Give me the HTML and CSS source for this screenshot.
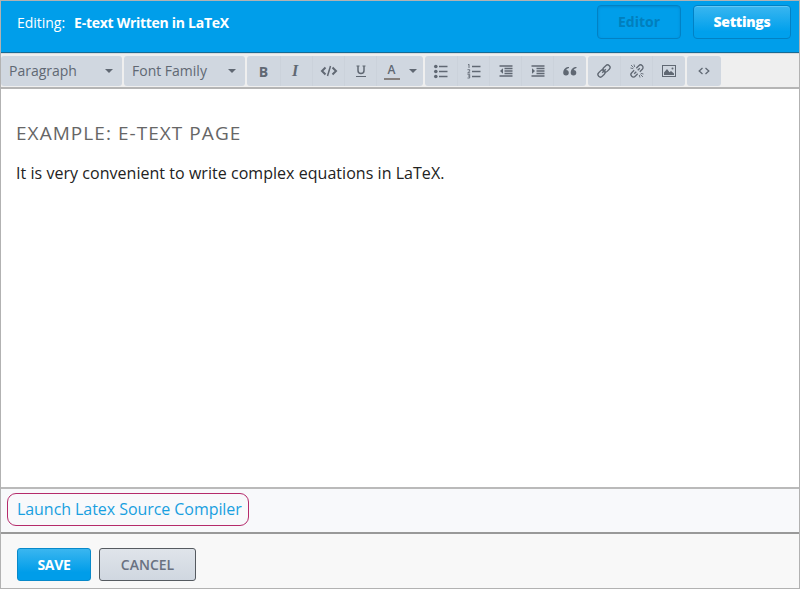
FILE: index.html
```html
<!DOCTYPE html>
<html lang="en">
<head>
<meta charset="utf-8">
<title>E-text Written in LaTeX</title>
<link rel="stylesheet" href="styles.css">
</head>
<body>
<div class="app">
  <header class="header">
    <div class="title"><span class="label">Editing:</span><strong>E-text Written in LaTeX</strong></div>
    <div class="tabs"><button class="tab pressed">Editor</button><button class="tab raised">Settings</button></div>
  </header>
  <div class="toolbar">
    <div class="group select para"><span>Paragraph</span><i class="caret"></i></div>
    <div class="group select family"><span>Font Family</span><i class="caret"></i></div>
    <div class="group format">
      <button class="tool bold">B</button>
      <button class="tool italic">I</button>
      <button class="tool"><svg width="18" height="16" viewBox="0 0 18 16"><path d="M5.500 4.500 2 8l3.500 3.500M12.500 4.500 16 8l-3.500 3.500" stroke-width="2"/><path d="M10.500 3 7.500 13" stroke-width="1.500"/></svg></button>
      <button class="tool"><svg width="12" height="16" viewBox="0 0 12 16"><path d="M3 3v4.500q0 3 3 3t3-3V3" stroke-width="1.500"/><path d="M1.500 3h3M7.500 3h3" stroke-width="1"/><path d="M1 13.500h10" stroke-width="1"/></svg></button>
      <button class="tool color"><span class="letter">A</span><i class="caret"></i></button>
    </div>
    <div class="group">
      <button class="tool"><svg width="16" height="16" viewBox="0 0 16 16"><path d="M6 3.500h8.500M6 8.500h8.500M6 13.500h8.500" stroke-width="1.300"/><g class="solid"><circle cx="2.800" cy="3.500" r="1.800"/><circle cx="2.800" cy="8.500" r="1.800"/><circle cx="2.800" cy="13.500" r="1.800"/></g></svg></button>
      <button class="tool"><svg width="16" height="16" viewBox="0 0 16 16"><path d="M6 3.500h8.500M6 8.500h8.500M6 13.500h8.500" stroke-width="1.300"/><path d="M2 2l1-.8V5M1.500 6.700h2.200v1.500l-2 1.600h2.500M1.500 11.300h2.200v3.700H1.500M2 13h1.500" stroke-width=".9"/></svg></button>
      <button class="tool"><svg width="16" height="16" viewBox="0 0 16 16"><path d="M1.500 3h13M6.500 5.500h8M6.500 8h8M6.500 10.500h8M1.500 13h13" stroke-width="1.600"/><path class="solid" d="M5 5.200v5.600L2 8z"/></svg></button>
      <button class="tool"><svg width="16" height="16" viewBox="0 0 16 16"><path d="M1.500 3h13M6.500 5.500h8M6.500 8h8M6.500 10.500h8M1.500 13h13" stroke-width="1.600"/><path class="solid" d="M2 5.200v5.600L5 8z"/></svg></button>
      <button class="tool"><svg width="16" height="16" viewBox="0 0 16 16"><path class="solid" d="M7 4C4 4 1.200 6 1.200 9.800a2.800 2.800 0 1 0 2.900-2.900Q4.800 5.400 7 5zM14.500 4c-3 0-5.800 2-5.800 5.800a2.800 2.800 0 1 0 2.900-2.900q.7-1.500 2.900-1.900z"/></svg></button>
    </div>
    <div class="group links">
      <button class="tool"><svg width="16" height="16" viewBox="0 0 16 16"><g transform="rotate(-45 8 8)"><rect x=".5" y="5.500" width="8" height="5" rx="2.500"/><rect x="7.500" y="5.500" width="8" height="5" rx="2.500"/><path d="M5.500 8h5"/></g></svg></button>
      <button class="tool"><svg width="16" height="16" viewBox="0 0 16 16"><g transform="rotate(-45 8 8)"><path d="M6.500 5.500H3a2.500 2.500 0 0 0 0 5h3.500M9.500 5.500H13a2.500 2.500 0 0 1 0 5H9.500M4 8h3M9 8h3"/></g><path d="M5 1.500l.7 2.500M1.500 5l2.700.6M2 2l2.500 2.500M11 14.500l-.7-2.500M14.500 11l-2.700-.6M14 14l-2.500-2.500" stroke-width=".9"/></svg></button>
      <button class="tool"><svg width="16" height="16" viewBox="0 0 16 16"><rect x="1.500" y="2.500" width="13" height="11" stroke-width="1"/><path class="solid" d="M3 12V9.500L6 6l2.500 3.300L10 8l3 2.500V12z"/><circle class="solid" cx="11.500" cy="5.500" r="1"/></svg></button>
    </div>
    <div class="group code">
      <button class="tool"><svg width="14" height="16" viewBox="0 0 14 16"><path d="M5.500 5 2.200 8l3.300 3M8.500 5l3.300 3-3.300 3" stroke-width="1.300"/></svg></button>
    </div>
  </div>
  <main class="document">
    <h1>Example: E-text Page</h1>
    <p>It is very convenient to write complex equations in LaTeX.</p>
  </main>
  <div class="compiler"><a class="launch">Launch Latex Source Compiler</a></div>
  <footer class="actions"><button class="save">SAVE</button><button class="cancel">CANCEL</button></footer>
</div>
</body>
</html>
```
FILE: styles.css
```css
* { box-sizing: border-box; }
body { margin: 0; font-family: "Open Sans", "Noto Sans", sans-serif; background: #fff; }
button { font: inherit; margin: 0; padding: 0; border: 0; background: none; }
.app { width: 800px; height: 589px; border: 1px solid #b2b2b2; display: flex; flex-direction: column; overflow: hidden; }
.header { height: 52px; flex: none; background: #009eea; border-bottom: 1px solid #176a93; display: flex; justify-content: space-between; padding: 4px 8px 0 16px; color: #fff; }
.title { font-size: 14px; line-height: 36px; white-space: nowrap; }
.title strong { letter-spacing: -.28px; }
.label { margin-right: 9px; letter-spacing: -.02px; }
.tabs { display: flex; gap: 12px; }
.tab { height: 34px; border: 1px solid #0281c4; border-radius: 4px; font-size: 14px; font-weight: 700; line-height: 30px; }
.pressed { width: 84px; color: #007fbd; box-shadow: inset 0 1px 3px #0089d0; }
.raised { width: 98px; color: #fff; font-weight: 800; letter-spacing: -.3px; background: linear-gradient(#3ab6f0, #00a0ec 80%); box-shadow: inset 0 1px #62c7f5; }
.toolbar { height: 36px; flex: none; background: #efefef; border-top: 1px solid #d8dadc; border-bottom: 2px solid #b5b5b5; display: flex; gap: 2px; padding-top: 2px; }
.group { height: 30px; display: flex; flex: none; background: #d0d7e0; border-radius: 3px; overflow: hidden; }
.select { align-items: center; justify-content: space-between; padding: 0 9px 1px 8px; font-size: 14px; color: #606873; }
.para { width: 121px; }
.family { width: 121px; }
.format { width: 176px; }
.tool { width: 32px; flex: none; height: 30px; display: flex; align-items: center; justify-content: center; color: #606873; border-left: 1px solid #cbd2db; }
.tool:first-child { border-left: 0; }
.format .tool:first-child { width: 33px; }
.group:nth-child(4) .tool:last-child, .links .tool:last-child { width: 33px; }
.code .tool { width: 34px; }
.tool svg { fill: none; stroke: #606873; stroke-width: 1.3; }
.tool .solid { fill: #606873; stroke: none; }
.bold { font-size: 14px; font-weight: 700; }
.format .italic { font: italic 700 16px "Liberation Serif", serif; padding-right: 3px; }
.format .color { width: 47px; gap: 9px; }
.letter { width: 16px; height: 16px; border-bottom: 2px solid #85807e; font-size: 12px; font-weight: 600; line-height: 12px; margin-top: 2px; }
.caret { width: 0; height: 0; border: 4px solid transparent; border-top-color: #606873; border-bottom: 0; }
.document { height: 398px; flex: none; padding: 31px 15px 0; }
h1 { margin: 0; font-size: 19px; font-weight: 400; line-height: 26px; letter-spacing: 1.05px; text-transform: uppercase; color: #666; }
p { margin: 14px 0 0; font-size: 16px; line-height: 26px; color: #222; letter-spacing: .04px; }
.compiler { height: 47px; flex: none; border-top: 2px solid #bababa; border-bottom: 2px solid #999; background: #f8f9fb; padding: 4px 6px; }
.launch { display: block; width: 242px; height: 33px; border: 1px solid #b52b6b; border-radius: 9px; padding-left: 9px; font-size: 16px; line-height: 31px; color: #189fe0; letter-spacing: -.06px; white-space: nowrap; }
.actions { flex: 1; background: #f8f8f8; display: flex; gap: 8px; padding: 14px 16px; }
.save, .cancel { height: 33px; border-radius: 3px; font-size: 14px; line-height: 31px; }
.save { width: 74px; border: 1px solid #0789ca; background: linear-gradient(#3ab6f0, #009de9 75%); color: #fff; font-weight: 700; letter-spacing: -.3px; }
.cancel { width: 97px; border: 1px solid #555a60; background: linear-gradient(#dfe4ea, #d0d7e0); color: #697181; font-weight: 600; }
```
